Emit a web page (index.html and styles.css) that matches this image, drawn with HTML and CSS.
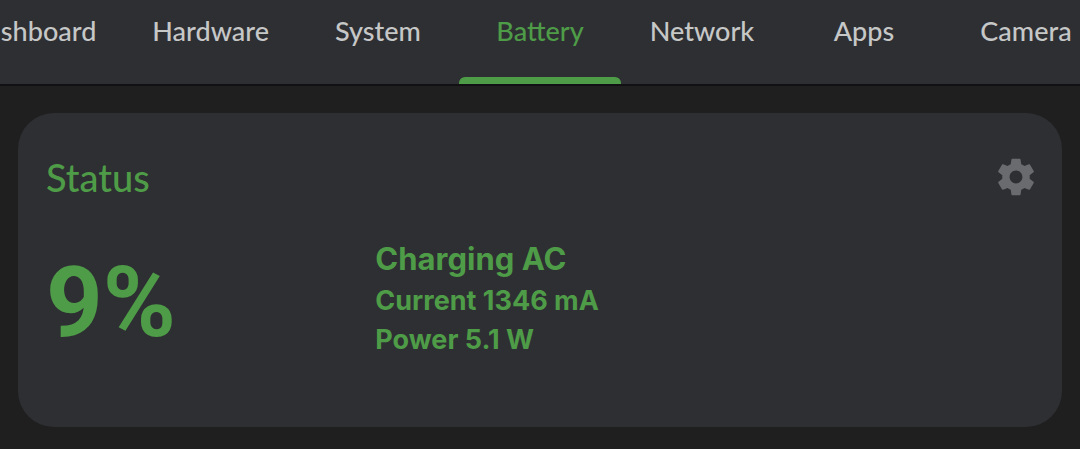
FILE: index.html
```html
<!DOCTYPE html>
<html lang="en">
<head>
<meta charset="utf-8">
<meta name="viewport" content="width=device-width, initial-scale=1">
<title>Battery</title>
<link rel="stylesheet" href="styles.css">
</head>
<body>
<nav class="tabs" aria-label="Sections">
  <div class="tab-group tab-group-before">
    <a class="tab" href="#dashboard">Dashboard</a>
    <a class="tab" href="#hardware">Hardware</a>
    <a class="tab" href="#system">System</a>
  </div>
  <a class="tab tab-active" href="#battery" aria-current="page">Battery</a>
  <div class="tab-group">
    <a class="tab" href="#network">Network</a>
    <a class="tab" href="#apps">Apps</a>
    <a class="tab" href="#camera">Camera</a>
  </div>
</nav>
<main class="content">
  <section class="card">
    <header class="card-header">
      <h1 class="card-title">Status</h1>
      <button class="settings" type="button" aria-label="Settings">
        <svg class="settings-icon" viewBox="0 0 24 24" aria-hidden="true"><path d="M19.43 12.98c.04-.32.07-.64.07-.98s-.03-.66-.07-.98l2.11-1.65c.19-.15.24-.42.12-.64l-2-3.46c-.12-.22-.39-.3-.61-.22l-2.49 1c-.52-.4-1.08-.73-1.69-.98l-.38-2.65C14.46 2.18 14.25 2 14 2h-4c-.25 0-.46.18-.49.42l-.38 2.65c-.61.25-1.17.59-1.69.98l-2.49-1c-.23-.09-.49 0-.61.22l-2 3.46c-.13.22-.07.49.12.64l2.11 1.65c-.04.32-.07.65-.07.98s.03.66.07.98l-2.11 1.65c-.19.15-.24.42-.12.64l2 3.46c.12.22.39.3.61.22l2.49-1c.52.4 1.08.73 1.69.98l.38 2.65c.03.24.24.42.49.42h4c.25 0 .46-.18.49-.42l.38-2.65c.61-.25 1.17-.59 1.69-.98l2.49 1c.23.09.49 0 .61-.22l2-3.46c.12-.22.07-.49-.12-.64l-2.11-1.65zM12 15.5c-1.93 0-3.5-1.57-3.5-3.5s1.57-3.5 3.5-3.5 3.5 1.57 3.5 3.5-1.57 3.5-3.5 3.5z"/></svg>
      </button>
    </header>
    <div class="status">
      <p class="level">9%</p>
      <div class="details">
        <p class="charging">Charging AC</p>
        <p class="reading">Current 1346 mA</p>
        <p class="reading">Power 5.1 W</p>
      </div>
    </div>
  </section>
</main>
</body>
</html>
```
FILE: styles.css
```css
* {
  box-sizing: border-box;
}

body {
  margin: 0;
  background: #1f1f1f;
  color: #4e9c47;
  font-family: Lato, sans-serif;
}

h1,
p {
  margin: 0;
}

.tabs {
  display: grid;
  grid-template-columns: minmax(0, 1fr) auto minmax(0, 1fr);
  background: #2e2f33;
  border-bottom: 2px solid #111114;
}

.tab-group {
  display: flex;
  overflow: hidden;
}

.tab-group-before {
  justify-content: flex-end;
}

.tab {
  display: flex;
  flex: none;
  flex-direction: column;
  align-items: center;
  min-width: 162px;
  padding: 13px 28px 0;
  color: #c6c7c7;
  font-size: 27px;
  font-weight: 500;
  line-height: 36px;
  text-decoration: none;
}

.tab-active {
  padding: 13px 0 0;
  color: #4e9c47;
}

.tab-active::after {
  content: "";
  width: 100%;
  height: 7px;
  margin-top: 28px;
  border-radius: 6px 6px 0 0;
  background: #4e9c47;
}

.content {
  padding: 27px 18px 22px;
}

.card {
  padding: 36px 28px 65px;
  border-radius: 36px;
  background: #2e2f33;
}

.card-header {
  display: flex;
  align-items: center;
  justify-content: space-between;
}

.card-title {
  font-size: 38px;
  font-weight: 500;
  line-height: 56px;
}

.settings {
  display: flex;
  margin-right: -4px;
  padding: 0;
  border: 0;
  background: none;
  color: #6a6b6f;
  cursor: pointer;
}

.settings-icon {
  width: 44px;
  height: 44px;
  fill: currentColor;
}

.status {
  display: grid;
  grid-template-columns: 1fr 2fr;
  align-items: end;
  margin-top: 32px;
}

.level {
  font-family: Roboto, sans-serif;
  font-size: 99px;
  font-weight: 700;
  line-height: 120px;
}

.details {
  padding-bottom: 3px;
  font-family: Inter, sans-serif;
  font-weight: 700;
}

.charging {
  font-size: 31px;
  line-height: 44px;
}

.reading {
  font-size: 27px;
  line-height: 39px;
}
```
